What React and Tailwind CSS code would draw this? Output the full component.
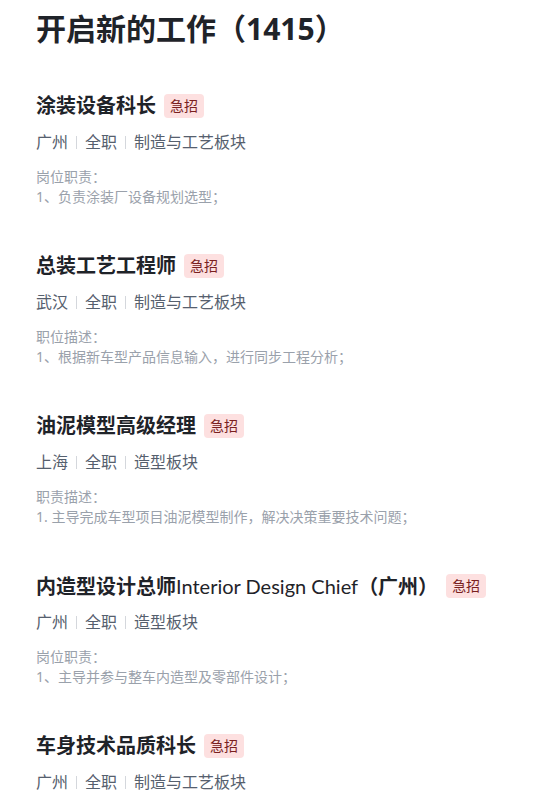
const jobs = [
  {
    title: '涂装设备科长',
    city: '广州',
    dept: '制造与工艺板块',
    label: '岗位职责：',
    line: '1、负责涂装厂设备规划选型；',
  },
  {
    title: '总装工艺工程师',
    city: '武汉',
    dept: '制造与工艺板块',
    label: '职位描述：',
    line: '1、根据新车型产品信息输入，进行同步工程分析；',
  },
  {
    title: '油泥模型高级经理',
    city: '上海',
    dept: '造型板块',
    label: '职责描述：',
    line: '1. 主导完成车型项目油泥模型制作，解决决策重要技术问题；',
  },
  {
    title: (
      <>
        内造型设计总师
        <span className="font-normal" style={{ fontFamily: 'Lato, "Noto Sans", sans-serif' }}>
          Interior Design Chief
        </span>
        （广州）
      </>
    ),
    city: '广州',
    dept: '造型板块',
    label: '岗位职责：',
    line: '1、主导并参与整车内造型及零部件设计；',
  },
  {
    title: '车身技术品质科长',
    city: '广州',
    dept: '制造与工艺板块',
    label: null,
    line: null,
  },
];

function Sep() {
  return <span className="mx-2 inline-block h-[13px] w-px bg-[#d4d7dc]" />;
}

function JobCard({ job }) {
  return (
    <div className="flex flex-col">
      <div className="flex h-7 items-center">
        <h2 className="text-[20px] font-bold leading-7 text-[#1f2329]">{job.title}</h2>
        <span className="ml-2 rounded-[4px] bg-[#fde0e0] px-[6px] text-[14px] leading-6 text-[#7a1f1f]">
          急招
        </span>
      </div>
      <div className="mt-[10px] flex h-6 items-center text-[16px] text-[#56606e]">
        <span>{job.city}</span>
        <Sep />
        <span>全职</span>
        <Sep />
        <span>{job.dept}</span>
      </div>
      {job.label && (
        <div className="mt-[13px] text-[14px] leading-5 text-[#9aa1ab]">
          <p>{job.label}</p>
          <p>{job.line}</p>
        </div>
      )}
    </div>
  );
}

export default function App() {
  return (
    <div
      className="min-h-screen bg-white px-9"
      style={{ fontFamily: '"Noto Sans", "Noto Sans CJK SC", sans-serif' }}
    >
      <h1 className="pt-[9px] text-[30px] font-bold leading-10 text-[#1f2329]">
        开启新的工作（1415）
      </h1>
      <div className="mt-[43px] flex flex-col gap-[45px]">
        {jobs.map((job, i) => (
          <JobCard key={i} job={job} />
        ))}
      </div>
    </div>
  );
}
